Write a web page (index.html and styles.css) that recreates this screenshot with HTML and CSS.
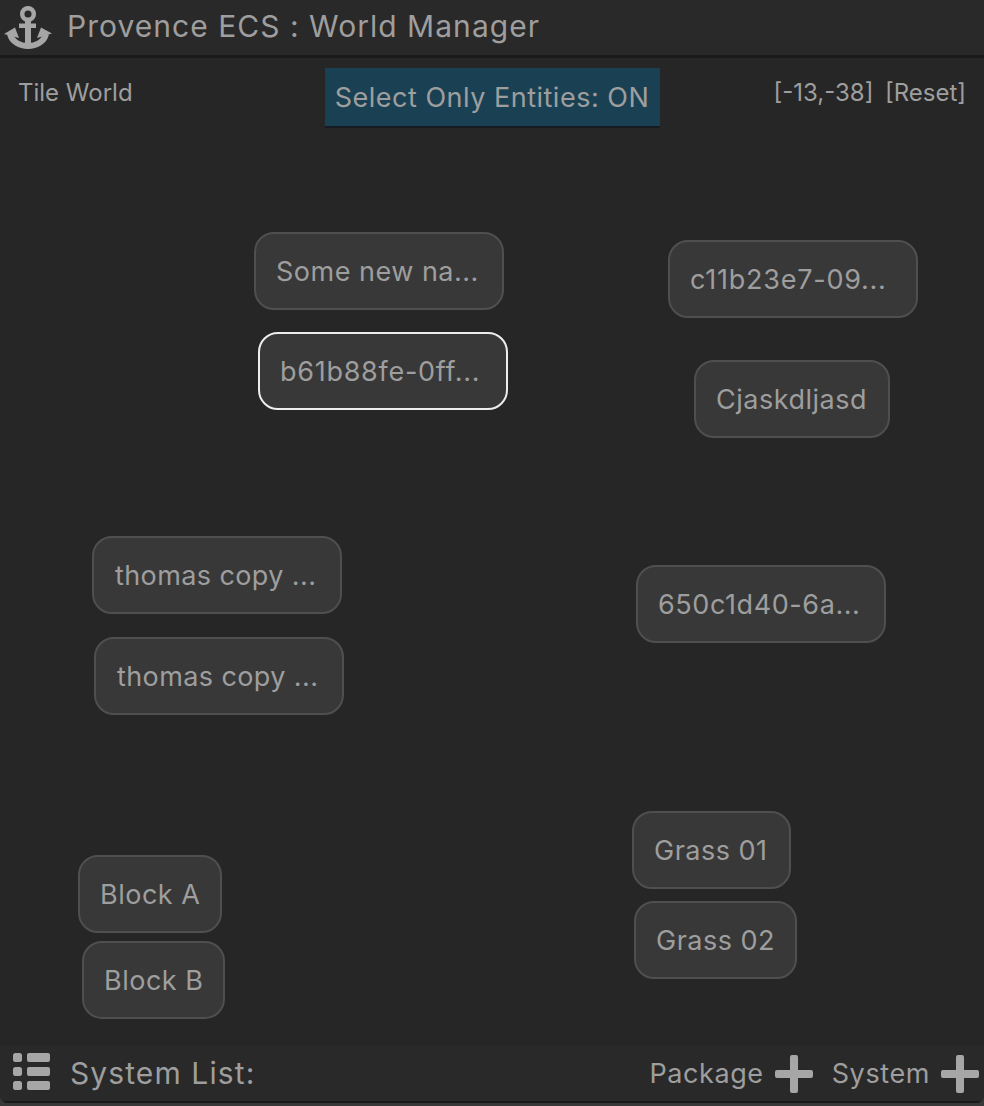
FILE: index.html
```html
<!DOCTYPE html>
<html lang="en">
<head>
    <meta charset="UTF-8">
    <meta name="viewport" content="width=device-width, initial-scale=1.0">
    <title>Provence ECS : World Manager</title>
    <link rel="stylesheet" href="styles.css">
</head>
<body>
    <div class="window">
        <div class="titlebar">
            <svg class="anchor" viewBox="4 5 48 44" width="48" height="44">
                <circle class="anchor-line" cx="28" cy="13" r="5.800" stroke-width="4.500"/>
                <rect class="anchor-fill" x="19" y="22.500" width="17" height="4.500"/>
                <rect class="anchor-fill" x="25" y="19" width="6" height="26"/>
                <path class="anchor-line" d="M10 33 C12 41 20 45 28 45 C36 45 44 41 46 33" stroke-width="6"/>
                <path class="anchor-fill" d="M4 33 L15 26.500 L19 37 Z"/>
                <path class="anchor-fill" d="M52 32.500 L41 26.500 L37 37 Z"/>
            </svg>
            <span class="title">Provence ECS : World Manager</span>
        </div>

        <div class="canvas">
            <div class="toolbar">
                <span class="world-name">Tile World</span>
                <span class="select-toggle">Select Only Entities: ON</span>
                <span class="coords">[-13,-38]&nbsp; [Reset]</span>
            </div>

            <div class="node wide pos-some">Some new na...</div>
            <div class="node wide selected pos-b61">b61b88fe-0ff...</div>
            <div class="node wide pos-c11">c11b23e7-09...</div>
            <div class="node pos-cjask">Cjaskdljasd</div>
            <div class="node wide pos-thomas1">thomas copy ...</div>
            <div class="node wide pos-thomas2">thomas copy ...</div>
            <div class="node wide pos-650">650c1d40-6a...</div>
            <div class="node pos-grass1">Grass 01</div>
            <div class="node pos-grass2">Grass 02</div>
            <div class="node pos-blocka">Block A</div>
            <div class="node pos-blockb">Block B</div>
        </div>

        <div class="footer">
            <svg class="list-icon" viewBox="0 0 38 38" width="38" height="38">
                <rect x="0" y="0" width="9" height="9" rx="2.500"/>
                <rect x="0" y="14" width="9" height="9" rx="2.500"/>
                <rect x="0" y="28" width="9" height="9" rx="2.500"/>
                <rect x="14" y="0" width="23" height="9" rx="2"/>
                <rect x="14" y="14" width="23" height="9" rx="2"/>
                <rect x="14" y="28" width="23" height="9" rx="2"/>
            </svg>
            <span class="footer-title">System List:</span>
            <span class="footer-action package"><span class="action-label">Package</span>
                <svg class="plus" viewBox="0 0 38 38" width="38" height="38"><path d="M15 2a2 2 0 0 1 2-2h4a2 2 0 0 1 2 2v13h13a2 2 0 0 1 2 2v4a2 2 0 0 1-2 2H23v13a2 2 0 0 1-2 2h-4a2 2 0 0 1-2-2V23H2a2 2 0 0 1-2-2v-4a2 2 0 0 1 2-2h13z"/></svg>
            </span>
            <span class="footer-action"><span class="action-label">System</span>
                <svg class="plus" viewBox="0 0 38 38" width="38" height="38"><path d="M15 2a2 2 0 0 1 2-2h4a2 2 0 0 1 2 2v13h13a2 2 0 0 1 2 2v4a2 2 0 0 1-2 2H23v13a2 2 0 0 1-2 2h-4a2 2 0 0 1-2-2V23H2a2 2 0 0 1-2-2v-4a2 2 0 0 1 2-2h13z"/></svg>
            </span>
        </div>
    </div>
</body>
</html>
```

FILE: styles.css
```css
html, body {
    margin: 0;
    height: 100%;
    background: #383838;
}
body {
    font-family: Inter, sans-serif;
    color: #9e9e9e;
    overflow: hidden;
}
.window {
    height: 1103px;
    display: flex;
    flex-direction: column;
    background: #262626;
    border-radius: 0 0 8px 8px;
    overflow: hidden;
}
.titlebar {
    height: 55px;
    flex: none;
    display: flex;
    align-items: center;
    padding-left: 4px;
    background: #292929;
    border-bottom: 3px solid #1a1a1a;
}
.anchor {
    margin-right: 15px;
}
.anchor-fill {
    fill: #a6a6a6;
}
.anchor-line {
    fill: none;
    stroke: #a6a6a6;
}
.title {
    font-size: 30px;
    letter-spacing: 1.03px;
    margin-top: -3px;
}
.canvas {
    position: relative;
    flex: 1;
}
.toolbar {
    display: grid;
    grid-template-columns: 1fr auto 1fr;
    align-items: start;
    padding: 10px 18px 0 18px;
    font-size: 24px;
}
.world-name, .coords {
    margin-top: 10px;
}
.coords {
    text-align: right;
    word-spacing: -1px;
}
.select-toggle {
    width: 335px;
    height: 58px;
    line-height: 60px;
    text-align: center;
    font-size: 27px;
    letter-spacing: 0.5px;
    background: #1a4153;
    border-bottom: 2px solid #151b20;
}
.node {
    position: absolute;
    box-sizing: border-box;
    height: 78px;
    line-height: 76px;
    padding: 0 20px;
    font-size: 27px;
    letter-spacing: 0.5px;
    white-space: nowrap;
    background: #383838;
    border: 2px solid #4f4f4f;
    border-radius: 20px;
}
.node.wide {
    width: 250px;
}
.node.selected {
    border-color: #ededed;
}
.pos-some { left: 254px; top: 174px; }
.pos-b61 { left: 258px; top: 274px; letter-spacing: 0.72px; }
.pos-c11 { left: 668px; top: 182px; letter-spacing: 0.76px; }
.pos-cjask { left: 694px; top: 302px; width: 196px; }
.pos-thomas1 { left: 92px; top: 478px; padding-left: 21px; letter-spacing: 0.4px; }
.pos-thomas2 { left: 94px; top: 579px; padding-left: 21px; letter-spacing: 0.4px; }
.pos-650 { left: 636px; top: 507px; letter-spacing: 0.58px; }
.pos-grass1 { left: 632px; top: 753px; width: 159px; }
.pos-grass2 { left: 634px; top: 843px; width: 163px; }
.pos-blocka { left: 78px; top: 797px; width: 144px; }
.pos-blockb { left: 82px; top: 883px; width: 143px; }
.footer {
    height: 58px;
    box-sizing: border-box;
    flex: none;
    display: flex;
    align-items: center;
    padding: 2px 5px 0 13px;
    background: #292929;
    border-bottom: 2px solid #1a1a1a;
}
.list-icon {
    fill: #a6a6a6;
    margin: -4px 19px 0 0;
}
.footer-title {
    font-size: 30px;
    letter-spacing: 1.1px;
    margin-top: -2px;
}
.footer-action {
    display: flex;
    align-items: center;
    gap: 11px;
    font-size: 27px;
    letter-spacing: 0.6px;
}
.action-label {
    margin-top: -2px;
}
.footer-action.package {
    margin-left: auto;
    margin-right: 19px;
}
.plus {
    fill: #a6a6a6;
}
```
